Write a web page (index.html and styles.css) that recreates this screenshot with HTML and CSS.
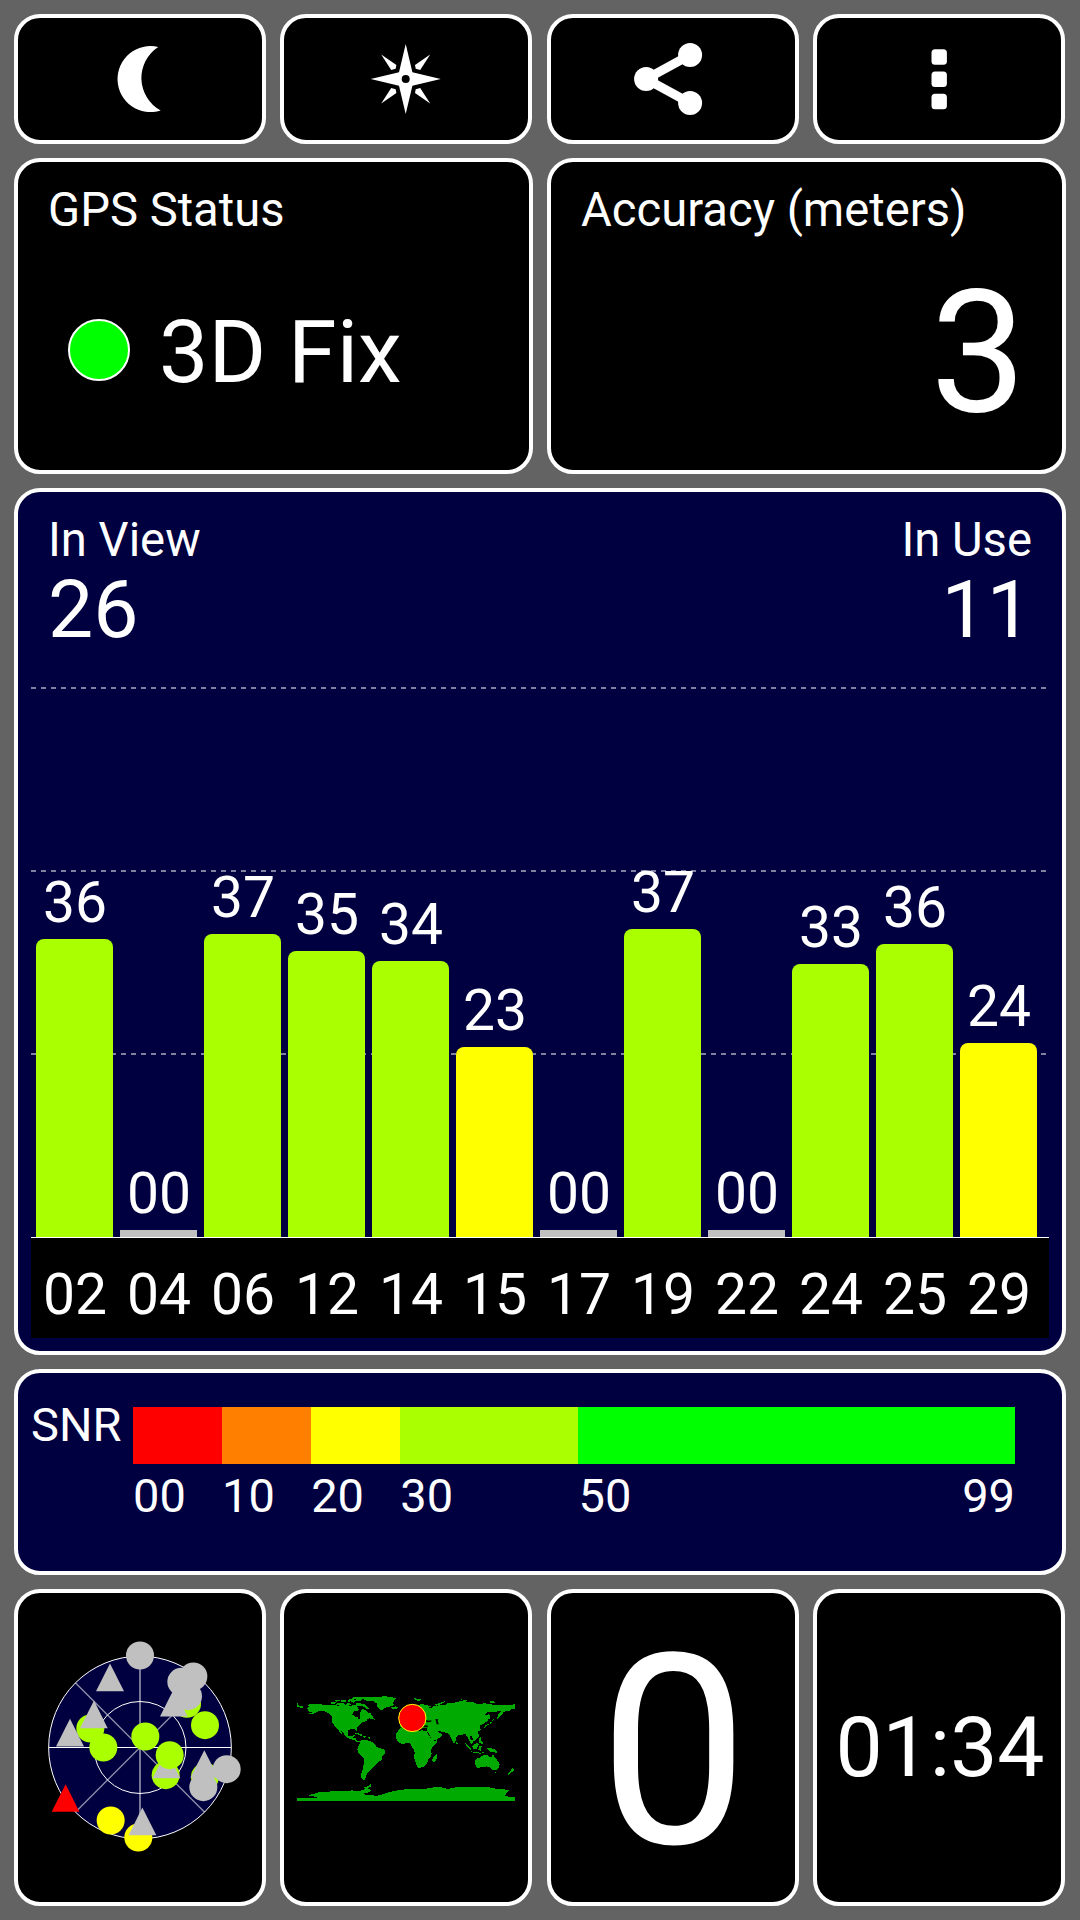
FILE: index.html
```
<!DOCTYPE html>
<html lang="en">
<head>
  <meta charset="UTF-8">
  <meta name="viewport" content="width=device-width, initial-scale=1.0">
  <title>GPS Test</title>
  <link rel="stylesheet" href="styles.css">
</head>
<body>

<div class="screen">

  <!-- Toolbar -->
  <div class="row row-4">
    <button class="card tool-btn" aria-label="Night mode">
      <svg class="icon" viewBox="-40.2 -40 80 80">
        <path d="M18 -32 A33 33 0 1 0 20.5 31.5 A37 37 0 0 1 18 -32 Z"/>
      </svg>
    </button>
    <button class="card tool-btn" aria-label="Compass">
      <svg class="icon" viewBox="-39.7 -40 80 80">
        <path fill-rule="evenodd" d="M0 -35 L6.7 -6.7 L35 0 L6.7 6.7 L0 35 L-6.7 6.7 L-35 0 L-6.7 -6.7 Z M-4 0 A4 4 0 1 0 4 0 A4 4 0 1 0 -4 0 Z"/>
        <path d="M-24.5 -24.5 L-9.3 -14 L-10 -10.3 L-14.5 -9 Z"/>
        <path d="M24.5 -24.5 L9.3 -14 L10 -10.3 L14.5 -9 Z"/>
        <path d="M-24.5 24.5 L-9.3 14 L-10 10.3 L-14.5 9 Z"/>
        <path d="M24.5 24.5 L9.3 14 L10 10.3 L14.5 9 Z"/>
      </svg>
    </button>
    <button class="card tool-btn" aria-label="Share">
      <svg class="icon" viewBox="-40.6 -40 80 80">
        <path class="icon-line" d="M16.5 -24 L-27.5 0 L16.5 24"/>
        <circle cx="16.5" cy="-24" r="12"/>
        <circle cx="-27.5" cy="0" r="12"/>
        <circle cx="16.5" cy="24" r="12"/>
      </svg>
    </button>
    <button class="card tool-btn" aria-label="Menu">
      <svg class="icon" viewBox="-40.5 -40 80 80">
        <rect x="-8" y="-29.7" width="15.4" height="15.5" rx="3.5"/>
        <rect x="-8" y="-7.5" width="15.4" height="15.5" rx="3.5"/>
        <rect x="-8" y="14.8" width="15.4" height="15.5" rx="3.5"/>
      </svg>
    </button>
  </div>

  <!-- Status -->
  <div class="row row-2">
    <div class="card info">
      <div class="label">GPS Status</div>
      <div class="fix">
        <span class="led"></span>
        <span>3D Fix</span>
      </div>
    </div>
    <div class="card info">
      <div class="label">Accuracy (meters)</div>
      <div class="accuracy">3</div>
    </div>
  </div>

  <!-- Signal chart -->
  <div class="card navy chart">
    <div class="chart-head">
      <div>
        <div class="label">In View</div>
        <div class="count">26</div>
      </div>
      <div class="right">
        <div class="label">In Use</div>
        <div class="count">11</div>
      </div>
    </div>
    <div class="plot">
      <div class="col">36<div class="bar good" style="height: 298px"></div></div>
      <div class="col">00<div class="bar none" style="height: 7px"></div></div>
      <div class="col">37<div class="bar good" style="height: 303px"></div></div>
      <div class="col">35<div class="bar good" style="height: 286px"></div></div>
      <div class="col">34<div class="bar good" style="height: 276px"></div></div>
      <div class="col">23<div class="bar fair" style="height: 190px"></div></div>
      <div class="col">00<div class="bar none" style="height: 7px"></div></div>
      <div class="col">37<div class="bar good" style="height: 308px"></div></div>
      <div class="col">00<div class="bar none" style="height: 7px"></div></div>
      <div class="col">33<div class="bar good" style="height: 273px"></div></div>
      <div class="col">36<div class="bar good" style="height: 293px"></div></div>
      <div class="col">24<div class="bar fair" style="height: 194px"></div></div>
    </div>
    <div class="axis">
      <span>02</span>
      <span>04</span>
      <span>06</span>
      <span>12</span>
      <span>14</span>
      <span>15</span>
      <span>17</span>
      <span>19</span>
      <span>22</span>
      <span>24</span>
      <span>25</span>
      <span>29</span>
    </div>
  </div>

  <!-- SNR legend -->
  <div class="card navy snr">
    <div class="snr-label">SNR</div>
    <div class="scale">
      <div class="step s00"><div class="swatch"></div>00</div>
      <div class="step s10"><div class="swatch"></div>10</div>
      <div class="step s20"><div class="swatch"></div>20</div>
      <div class="step s30"><div class="swatch"></div>30</div>
      <div class="step s50"><div class="swatch"></div><div class="ends"><span>50</span><span>99</span></div></div>
    </div>
  </div>

  <!-- Bottom tiles -->
  <div class="row row-4">
    <div class="card tile">
      <svg class="sky" viewBox="0 -6.5 660 720">
        <circle class="disc" cx="330" cy="352" r="274"/>
        <g class="spokes">
          <path d="M330 78 V626" stroke-width="5"/>
          <path d="M136 158 L524 546 M524 158 L136 546" stroke-width="4"/>
        </g>
        <path class="ring" d="M56 352 H604"/>
        <circle class="ring" cx="330" cy="352" r="274"/>
        <circle class="ring" cx="330" cy="352" r="138"/>
        <g class="sat-good">
          <circle cx="181" cy="295" r="42"/>
          <circle cx="220" cy="352" r="42"/>
          <circle cx="346" cy="319" r="42"/>
          <circle cx="407" cy="435" r="42"/>
          <circle cx="471" cy="221" r="42"/>
          <circle cx="525" cy="285" r="42"/>
          <circle cx="525" cy="440" r="42"/>
        </g>
        <g class="sat-none">
          <path d="M409 361 L451 444 H368 Z"/>
        </g>
        <circle class="sat-good" cx="419" cy="375" r="42"/>
        <g class="sat-fair">
          <circle cx="242" cy="571" r="42"/>
          <circle cx="325" cy="622" r="42"/>
        </g>
        <g class="sat-none">
          <circle cx="330" cy="76" r="42"/>
          <circle cx="454" cy="155" r="42"/>
          <circle cx="490" cy="139" r="42"/>
          <circle cx="474" cy="198" r="42"/>
          <circle cx="590" cy="417" r="42"/>
          <circle cx="520" cy="471" r="42"/>
          <path d="M240 100 L282 183 H198 Z"/>
          <path d="M192 211 L233 294 H150 Z"/>
          <path d="M120 266 L162 349 H78 Z"/>
          <path d="M432 176 L473 259 H390 Z"/>
          <path d="M523 360 L565 443 H481 Z"/>
          <path d="M337 532 L379 615 H296 Z"/>
        </g>
        <path class="sat-weak" d="M107 462 L148 545 H65 Z"/>
      </svg>
    </div>
    <div class="card tile">
      <svg class="map" viewBox="2 9 720 390">
        <g class="land">
          <!-- North America -->
          <path d="M36 69 L40 76 L52 79 L54 84 L36 81 Z"/>
          <path d="M65 75 L78 72 L98 73 L120 74 L136 76 L146 75 L166 78 L178 75 L196 79 L206 73 L214 77 L219 84 L210 90 L203 97 L201 104 L208 109 L217 112 L221 119 L225 111 L223 103 L227 93 L232 87 L240 91 L247 97 L255 99 L262 109 L266 116 L257 113 L247 117 L243 124 L231 126 L225 133 L218 139 L214 146 L215 154 L211 149 L200 147 L189 150 L187 160 L190 169 L200 169 L204 164 L208 166 L204 173 L213 175 L214 182 L220 184 L229 182 L225 187 L215 186 L206 180 L193 176 L181 170 L174 159 L166 151 L170 160 L172 166 L164 157 L158 147 L147 137 L140 127 L141 116 L139 107 L130 99 L118 94 L104 92 L92 98 L78 103 L66 102 L78 98 L85 95 L70 95 L67 88 L62 84 L72 81 Z"/>
          <!-- Arctic islands -->
          <path d="M136 67 L152 65 L150 70 L138 73 Z M151 73 L160 68 L178 71 L181 78 L163 77 Z M148 62 L160 59 L164 63 L153 65 Z M166 61 L179 59 L183 65 L169 66 Z M182 72 L190 68 L197 74 L188 79 Z M187 59 L202 57 L213 62 L205 68 L196 64 L190 67 Z M193 54 L208 52 L235 50 L256 51 L250 56 L232 58 L222 64 L206 62 L214 57 L203 56 Z M209 71 L222 69 L237 73 L247 80 L253 88 L243 86 L235 80 L224 77 L213 77 Z M211 86 L222 88 L218 93 L209 92 Z M252 112 L264 112 L268 119 L256 117 Z"/>
          <!-- Greenland and Iceland -->
          <path d="M231 56 L256 51 L281 51 L301 48 L312 51 L332 54 L327 62 L323 69 L326 75 L315 79 L299 83 L292 91 L283 88 L276 80 L274 70 L264 64 L246 63 Z M316 82 L330 79 L340 82 L335 87 L321 87 Z"/>
          <!-- Caribbean -->
          <path d="M208 160 L218 159 L233 165 L227 168 L217 163 Z M233 168 L244 169 L238 173 L231 171 Z M248 171 L256 173 L255 177 L249 175 Z"/>
          <!-- South America -->
          <path d="M227 182 L234 179 L241 181 L252 182 L261 186 L270 193 L274 201 L287 205 L300 211 L298 220 L291 229 L288 241 L277 247 L269 257 L262 264 L257 269 L249 277 L243 285 L242 292 L236 297 L243 301 L230 298 L226 288 L230 276 L233 262 L236 248 L235 235 L226 227 L219 217 L216 207 L219 199 L223 192 Z"/>
          <!-- Africa -->
          <path d="M346 145 L361 143 L379 142 L385 150 L397 153 L409 151 L424 153 L430 165 L438 178 L447 183 L457 180 L452 191 L441 201 L437 211 L439 221 L437 230 L429 238 L425 249 L416 259 L402 264 L396 262 L391 246 L386 231 L388 218 L385 207 L379 200 L378 192 L369 188 L352 193 L341 188 L333 177 L333 161 L339 152 Z M454 223 L456 232 L449 246 L443 248 L440 239 L445 230 Z"/>
          <!-- Europe and Asia -->
          <path d="M396 75 L410 72 L424 76 L439 79 L429 82 L438 84 L448 77 L468 76 L482 75 L485 69 L497 70 L511 67 L531 62 L543 65 L564 66 L575 72 L599 70 L624 74 L642 74 L658 76 L676 74 L690 73 L690 85 L677 88 L674 94 L665 92 L654 97 L648 106 L636 118 L637 105 L646 97 L651 91 L638 94 L620 97 L608 96 L598 105 L609 106 L611 116 L603 126 L591 133 L583 138 L587 150 L577 156 L582 165 L577 175 L570 181 L559 186 L563 178 L559 169 L553 166 L555 177 L562 184 L561 193 L555 188 L551 178 L543 166 L538 161 L531 164 L520 166 L512 174 L510 186 L505 190 L498 176 L493 165 L485 159 L473 156 L458 153 L463 159 L472 162 L466 171 L455 178 L444 182 L437 174 L430 161 L424 151 L427 143 L416 143 L402 147 L388 143 L360 139 L347 144 L343 136 L350 130 L360 118 L366 99 L380 86 Z"/>
          <path d="M387 55 L399 56 L407 58 L402 62 L389 61 Z M449 73 L464 69 L477 64 L480 66 L466 72 L453 78 Z M527 58 L541 60 L549 63 L535 62 Z M608 65 L623 64 L632 67 L616 69 Z"/>
          <!-- Islands -->
          <path d="M610 99 L615 111 L612 117 L608 107 Z M629 116 L622 122 L616 119 L620 128 L613 133 L603 138 L599 143 L594 145 L601 135 L613 131 L618 120 Z M583 169 L589 174 L586 183 L594 186 L591 193 L581 188 Z M513 185 L518 190 L513 192 Z M538 188 L547 195 L556 205 L559 214 L548 204 Z M560 199 L574 188 L580 194 L575 206 L564 208 Z M581 198 L592 197 L585 203 L587 212 L579 211 Z M557 214 L573 216 L583 218 L597 217 L585 221 L567 219 Z M602 203 L617 204 L630 209 L638 220 L625 216 L616 215 L609 210 Z"/>
          <!-- Australia and New Zealand -->
          <path d="M571 237 L581 234 L588 228 L598 225 L606 223 L612 231 L619 232 L623 222 L628 232 L636 241 L643 252 L640 264 L632 271 L621 269 L613 262 L604 259 L591 261 L577 264 L571 259 L569 247 Z M627 275 L635 275 L631 281 Z M681 264 L688 267 L684 273 L678 277 L669 284 L665 282 L675 275 Z"/>
          <!-- Antarctica -->
          <path d="M36 354 L95 353 L83 349 L69 346 L88 341 L99 337 L124 335 L147 334 L178 334 L201 331 L220 334 L238 328 L237 322 L252 317 L257 312 L258 319 L248 325 L257 332 L247 338 L229 342 L254 346 L277 347 L297 341 L322 334 L350 329 L380 327 L415 327 L445 322 L465 321 L489 327 L515 321 L560 322 L607 321 L643 328 L672 329 L665 338 L659 346 L672 351 L690 352 L690 363 L36 363 Z"/>
        </g>
        <!-- Black Sea, Caspian -->
        <path class="sea" d="M421 120 L430 122 L438 121 L438 125 L424 127 Z M450 117 L459 118 L457 124 L461 133 L454 133 L452 124 Z M414 137 L426 136 L428 142 L415 142 Z"/>
        <circle class="pin" cx="381" cy="114" r="41"/>
      </svg>
    </div>
    <div class="card tile speed">0</div>
    <div class="card tile clock">01:34</div>
  </div>

</div>

</body>
</html>
```
FILE: styles.css
```
* {
  box-sizing: border-box;
}

body {
  margin: 0;
  background-color: #636363;
  color: #fff;
  font-family: Roboto, sans-serif;
}

.screen {
  display: grid;
  grid-template-rows: 130px 316px 867px 206px 317px;
  gap: 14px;
  width: 1080px;
  height: 1920px;
  padding: 14px;
}

.row {
  display: grid;
  gap: 14px;
}

.row-4 {
  grid-template-columns: repeat(4, 252px);
  justify-content: space-between;
  width: 1051px;
}

.row-2 {
  grid-template-columns: repeat(2, 1fr);
}

.card {
  background-color: #000;
  border: 4px solid #fff;
  border-radius: 26px;
  color: #fff;
}

.navy {
  background-color: #000040;
}

/* Toolbar */
.tool-btn {
  display: flex;
  align-items: center;
  justify-content: center;
  padding: 0;
  cursor: pointer;
}

.icon {
  width: 80px;
  height: 80px;
  fill: #fff;
}

.icon-line {
  fill: none;
  stroke: #fff;
  stroke-width: 9;
}

/* Status cards */
.info {
  padding: 20px 36px 0 30px;
}

.label {
  font-size: 47.2px;
  line-height: 56px;
}

.fix {
  display: flex;
  align-items: center;
  gap: 29px;
  margin-top: 62px;
  padding-left: 20px;
  font-size: 88px;
  line-height: 104px;
}

.led {
  width: 62px;
  height: 62px;
  margin-bottom: 4px;
  background-color: #00ff00;
  border: 2px solid #fff;
  border-radius: 50%;
}

.accuracy {
  margin-top: 15px;
  font-size: 170px;
  line-height: 200px;
  text-align: right;
}

/* Signal chart */
.chart {
  padding: 20px 13px 0;
}

.chart-head {
  display: flex;
  justify-content: space-between;
  height: 175px;
  padding: 0 17px;
}

.right {
  text-align: right;
}

.count {
  margin-top: 2px;
  font-size: 80.5px;
  line-height: 80px;
}

.plot {
  --dash: repeating-linear-gradient(90deg, #8080a0 0 5px, transparent 5px 10px);
  display: flex;
  align-items: flex-end;
  gap: 7px;
  height: 551px;
  padding-left: 5px;
  border-bottom: 1px solid #fff;
  background-image: var(--dash), var(--dash), var(--dash);
  background-position: 0 0, 0 183px, 0 366px;
  background-size: 1016px 2px;
  background-repeat: no-repeat;
}

.col {
  width: 77px;
  font-size: 57px;
  line-height: 58px;
  text-align: center;
  text-indent: 1px;
}

.bar {
  margin-top: 7px;
  border-radius: 8px 8px 0 0;
}

.good {
  background-color: #aaff00;
}

.fair {
  background-color: #ffff00;
}

.none {
  background-color: #c0c0c0;
  border-radius: 0;
}

.axis {
  display: flex;
  gap: 7px;
  height: 100px;
  padding: 13px 0 0 5px;
  background-color: #000;
  font-size: 57px;
  line-height: 87px;
}

.axis span {
  width: 77px;
  text-align: center;
  text-indent: 1px;
}

/* SNR legend */
.snr {
  display: flex;
  padding: 34px 47px 0 13px;
  font-size: 47px;
  line-height: 56px;
}

.snr-label {
  width: 102px;
  margin-top: -10px;
}

.scale {
  display: flex;
  flex: 1;
}

.step {
  flex: 10 1 0;
}

.swatch {
  height: 57px;
  margin-bottom: 4px;
}

.s00 .swatch {
  background-color: #ff0000;
}

.s10 .swatch {
  background-color: #ff8000;
}

.s20 .swatch {
  background-color: #ffff00;
}

.s30 {
  flex-grow: 20;
}

.s30 .swatch {
  background-color: #aaff00;
}

.s50 {
  flex-grow: 49;
}

.s50 .swatch {
  background-color: #00ff00;
}

.ends {
  display: flex;
  justify-content: space-between;
}

/* Bottom tiles */
.tile {
  display: flex;
  align-items: center;
  justify-content: center;
}

.sky {
  width: 220px;
  height: 240px;
}

.disc {
  fill: #000040;
}

.ring {
  fill: none;
  stroke: #fff;
  stroke-width: 3;
}

.spokes {
  fill: none;
  stroke: #8f8fab;
}

.sat-good {
  fill: #aaff00;
}

.sat-fair {
  fill: #ffff00;
}

.sat-none {
  fill: #c0c0c0;
}

.sat-weak {
  fill: #ff0000;
}

.map {
  width: 240px;
  height: 130px;
}

.land {
  fill: #00aa00;
  shape-rendering: crispEdges;
}

.sea {
  fill: #000;
}

.pin {
  fill: #ff0000;
  stroke: #ffff00;
  stroke-width: 3;
}

.speed {
  padding: 9px 0 0 2px;
  font-size: 266px;
  line-height: 300px;
}

.clock {
  padding-left: 2px;
  font-size: 84px;
}
```
